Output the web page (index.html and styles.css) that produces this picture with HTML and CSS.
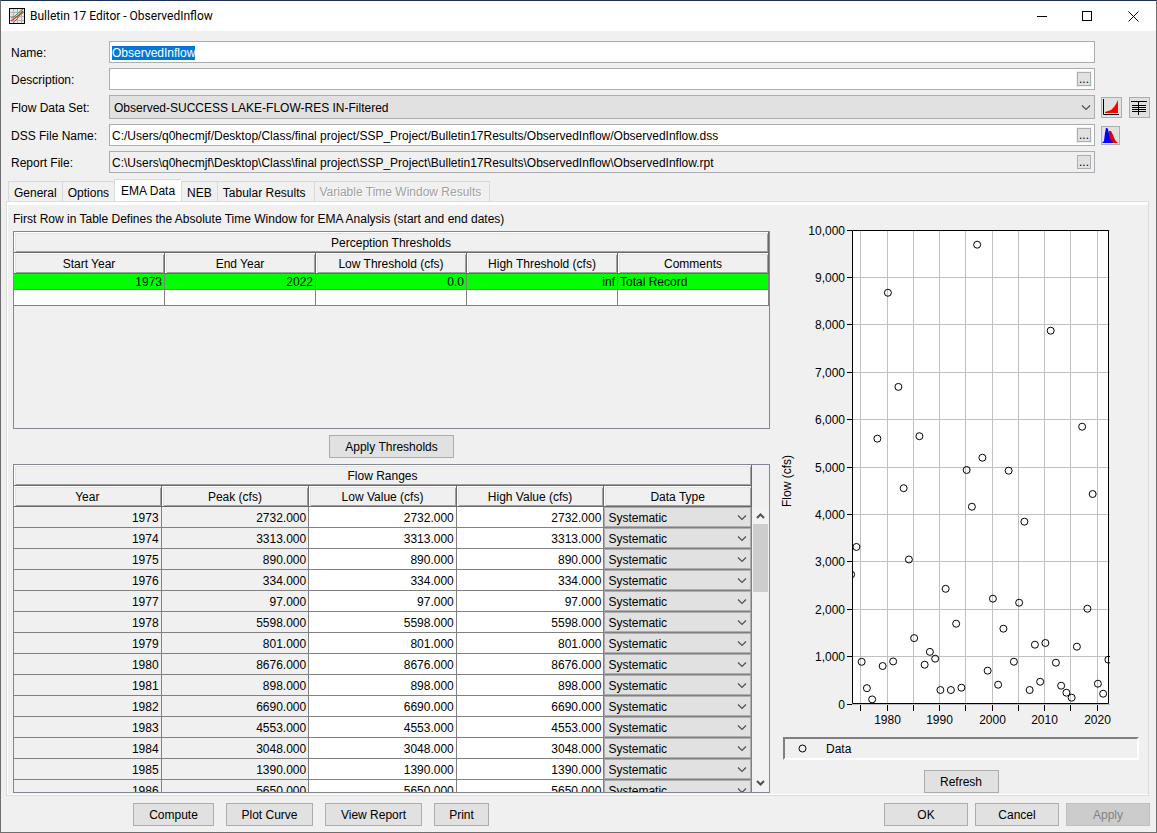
FILE: index.html
```html
<!DOCTYPE html>
<html lang="en">
<head>
  <meta charset="UTF-8" />
  <meta name="viewport" content="width=device-width, initial-scale=1.0"/>
  <title>Bulletin 17 Editor - ObservedInflow</title>
  <link rel="stylesheet" href="styles.css">
</head>
<body>
  <header class="titlebar">
    <svg class="app-icon" width="16" height="16" viewBox="0 0 16 16">
      <rect x="0.5" y="0.5" width="15" height="15" fill="#e4e4e4" stroke="#000"/>
      <path d="M4.5 1v14M8.5 1v14M12.5 1v14M1 4.5h14M1 8.5h14M1 12.5h14" stroke="#b4b4b4"/>
      <path d="M2 10l4-2 3-3 5-4M4 15l4-4 3-4 4-3" stroke="#3a9a4a" fill="none"/>
      <path d="M2 13l4-3 4-3 4-4" stroke="#e03030" stroke-width="1.3" fill="none"/>
    </svg>
    <h1>Bulletin 17 Editor - ObservedInflow</h1>
    <div class="window-buttons">
      <button type="button" aria-label="Minimize"><svg width="11" height="11"><path d="M1 5.5h10" stroke="#000"/></svg></button>
      <button type="button" aria-label="Maximize"><svg width="11" height="11"><rect x="0.5" y="0.5" width="9" height="9" fill="none" stroke="#000"/></svg></button>
      <button type="button" aria-label="Close"><svg width="11" height="11"><path d="M0.5 0.5l10 10M10.5 0.5l-10 10" stroke="#000"/></svg></button>
    </div>
  </header>

  <form class="fields">
    <label for="name">Name:</label>
    <div class="field"><input type="text" id="name" value="ObservedInflow"></div>
    <div class="tools"></div>

    <label for="description">Description:</label>
    <div class="field"><input type="text" id="description"><button type="button" class="browse">...</button></div>
    <div class="tools"></div>

    <label for="dataset">Flow Data Set:</label>
    <select id="dataset" class="dataset">
      <option>Observed-SUCCESS LAKE-FLOW-RES IN-Filtered</option>
    </select>
    <div class="tools">
      <button type="button" class="tool" aria-label="Plot">
        <svg width="19" height="19" viewBox="0 0 19 19">
          <path d="M3 15v-1l3-1 3-1 3-3 2-3 2-4v13z" fill="#f00"/>
          <path d="M1.5 1v15.5H17" stroke="#000" fill="none"/>
        </svg>
      </button>
      <button type="button" class="tool" aria-label="Tabulate">
        <svg width="19" height="19" viewBox="0 0 19 19">
          <path d="M1 3.500h16M2 7.500h14M2 9.500h14M2 11.500h14M2 13.500h14M8.500 3v14" stroke="#000" fill="none"/>
        </svg>
      </button>
    </div>

    <label for="dssfile">DSS File Name:</label>
    <div class="field"><input type="text" id="dssfile" value="C:/Users/q0hecmjf/Desktop/Class/final project/SSP_Project/Bulletin17Results/ObservedInflow/ObservedInflow.dss"><button type="button" class="browse">...</button></div>
    <div class="tools">
      <button type="button" class="tool small" aria-label="Open DSS file">
        <svg width="17" height="17" viewBox="0 0 17 17">
          <path d="M5 16l1-8 1-4h2l2 4 2 5 3 3z" fill="#e00000"/>
          <path d="M0 16l2-2 1-8 1-5h1l1 1 1 5 1 5 3 4z" fill="#0000ff"/>
        </svg>
      </button>
    </div>

    <label for="report">Report File:</label>
    <div class="field readonly"><input type="text" id="report" readonly value="C:\Users\q0hecmjf\Desktop\Class\final project\SSP_Project\Bulletin17Results\ObservedInflow\ObservedInflow.rpt"><button type="button" class="browse">...</button></div>
    <div class="tools"></div>
  </form>

  <nav class="tabs">
    <button type="button">General</button>
    <button type="button">Options</button>
    <button type="button" class="active">EMA Data</button>
    <button type="button">NEB</button>
    <button type="button" class="wide">Tabular Results</button>
    <button type="button" class="wide" disabled>Variable Time Window Results</button>
  </nav>

  <main class="panel">
    <section class="tables">
      <p>First Row in Table Defines the Absolute Time Window for EMA Analysis (start and end dates)</p>
      <div class="scrollpane thresholds">
        <table>
          <colgroup><col span="5"></colgroup>
          <thead>
            <tr><th colspan="5">Perception Thresholds</th></tr>
            <tr>
              <th>Start Year</th>
              <th>End Year</th>
              <th>Low Threshold (cfs)</th>
              <th>High Threshold (cfs)</th>
              <th>Comments</th>
            </tr>
          </thead>
          <tbody>
            <tr class="total"><td>1973</td><td>2022</td><td>0.0</td><td>inf</td><td class="text">Total Record</td></tr>
            <tr><td></td><td></td><td></td><td></td><td class="text"></td></tr>
          </tbody>
        </table>
      </div>
      <button type="button" class="btn apply-thresholds">Apply Thresholds</button>
      <div class="scrollpane ranges">
        <table>
          <colgroup><col span="5"></colgroup>
          <thead>
            <tr><th colspan="5">Flow Ranges</th></tr>
            <tr>
              <th>Year</th>
              <th>Peak (cfs)</th>
              <th>Low Value (cfs)</th>
              <th>High Value (cfs)</th>
              <th>Data Type</th>
            </tr>
          </thead>
          <tbody id="rangeRows"></tbody>
        </table>
        <div class="scrollbar">
          <svg width="9" height="6"><path d="M1 5l3.500-3.500L8 5" stroke="#505050" stroke-width="2" fill="none"/></svg>
          <div class="track"><div class="thumb"></div></div>
          <svg width="9" height="6"><path d="M1 1l3.500 3.500L8 1" stroke="#505050" stroke-width="2" fill="none"/></svg>
        </div>
      </div>
    </section>

    <section class="plot">
      <svg id="chart" class="chart" viewBox="0 0 356 505"></svg>
      <div class="legend">
        <svg width="9" height="9"><circle cx="4.500" cy="4.500" r="3.500" fill="none" stroke="#000"/></svg>
        <span>Data</span>
      </div>
      <button type="button" class="btn refresh">Refresh</button>
    </section>
  </main>

  <footer class="actions">
    <button type="button" class="btn compute">Compute</button>
    <button type="button" class="btn plot-curve">Plot Curve</button>
    <button type="button" class="btn view-report">View Report</button>
    <button type="button" class="btn print">Print</button>
    <div class="confirm">
      <button type="button" class="btn">OK</button>
      <button type="button" class="btn">Cancel</button>
      <button type="button" class="btn" disabled>Apply</button>
    </div>
  </footer>

  <script src="script.js"></script>
</body>
</html>
```
FILE: styles.css
```css
* {
  margin: 0;
  padding: 0;
  box-sizing: border-box;
}

body {
  display: flex;
  flex-direction: column;
  height: 100vh;
  min-height: 600px;
  background: #f0f0f0;
  border: 1px solid #6e6e6e;
  border-top-color: #1c2f57;
  color: #000;
  font-family: "Liberation Sans", Arial, sans-serif;
  font-size: 12px;
  line-height: 16px;
}

button, input, select {
  font: inherit;
  color: inherit;
}

::selection {
  background: #0078d7;
  color: #fff;
}

/* title bar */
.titlebar {
  display: flex;
  align-items: center;
  height: 30px;
  padding-left: 8px;
  background: #fff;
}

.titlebar h1 {
  flex: 1;
  margin-left: 5px;
  font-family: Roboto, "Segoe UI", sans-serif;
  font-size: 12px;
  font-weight: normal;
}

.window-buttons {
  display: flex;
}

.window-buttons button {
  display: flex;
  align-items: center;
  justify-content: center;
  width: 46px;
  height: 30px;
  border: none;
  background: none;
}

/* form */
.fields {
  display: grid;
  grid-template-columns: 98px 1fr 61px;
  row-gap: 5px;
  align-items: center;
  padding: 10px 0 6px 10px;
}

.fields label {
  padding-top: 2px;
}

.field {
  display: flex;
  align-items: center;
  height: 22px;
  padding: 0 3px 0 2px;
  background: #fff;
  border: 1px solid #abadb3;
}

.field.readonly {
  background: #f0f0f0;
}

.field input {
  flex: 1;
  min-width: 0;
  height: 18px;
  padding-top: 1px;
  border: none;
  outline: none;
  background: none;
}

.browse {
  width: 14px;
  height: 14px;
  line-height: 10px;
  background: #e1e1e1;
  border: 1px solid #adadad;
  outline: 1px solid #f0f0f0;
}

select {
  appearance: none;
  background: #e1e1e1 url("data:image/svg+xml,%3Csvg xmlns='http://www.w3.org/2000/svg' width='10' height='8'%3E%3Cpath d='M1 2.5l4 4 4-4' fill='none' stroke='%23505050' stroke-width='1.2'/%3E%3C/svg%3E") no-repeat right 3px center;
  border: 1px solid #adadad;
}

.dataset {
  height: 24px;
  padding: 1px 0 0 4px;
}

.tools {
  display: flex;
  gap: 7px;
  padding-left: 6px;
}

.tool {
  width: 21px;
  height: 21px;
  background: #e1e1e1;
  border: 1px solid #adadad;
}

.tool.small {
  width: 19px;
  height: 19px;
}

.tool svg {
  display: block;
}

/* tabs */
.tabs {
  display: flex;
  align-items: flex-end;
  height: 22px;
  padding-left: 7px;
}

.tabs button {
  height: 20px;
  padding: 2px 5px 0;
  background: #f0f0f0;
  border: 1px solid #d9d9d9;
  border-bottom: none;
  border-right: none;
}

.tabs button.active {
  height: 22px;
  padding: 1px 6px 0;
  background: #fff;
}

.tabs button.wide {
  padding-right: 8px;
}

.tabs button:last-child {
  border-right: 1px solid #d9d9d9;
}

.tabs button:disabled {
  padding-bottom: 2px;
  color: #a0a0a0;
  text-shadow: 1px 1px #fff;
}

.panel {
  flex: 1;
  display: grid;
  grid-template-columns: 757fr 356fr;
  column-gap: 13px;
  min-height: 0;
  margin: 0 7px 0 5px;
  padding: 9px 9px 2px 6px;
  border: 1px solid #dcdcdc;
  box-shadow: inset 1px 3px #fff, inset 0 -1px #fff;
}

.tables {
  display: flex;
  flex-direction: column;
  min-height: 0;
}

.tables p {
  margin-bottom: 4px;
}

.scrollpane {
  display: flex;
  align-items: flex-start;
  overflow: hidden;
  min-height: 0;
  border: 1px solid #828790;
}

.thresholds {
  flex: 3 1 0;
}

.ranges {
  flex: 5 1 0;
}

table {
  flex: 1;
  width: 100%;
  min-width: 0;
  table-layout: fixed;
  border-collapse: separate;
  border-spacing: 0;
}

col {
  width: 20%;
}

th {
  height: 21px;
  padding-top: 1px;
  font-weight: normal;
  border-right: 1px solid #696969;
  border-bottom: 1px solid #696969;
  box-shadow: inset 1px 1px #fff, inset 2px 2px #e3e3e3, inset -1px -1px #a0a0a0;
}

td {
  height: 16px;
  padding: 1px 2px 0;
  line-height: 14px;
  text-align: right;
  background: #fff;
  border-right: 1px solid #808080;
  border-bottom: 1px solid #808080;
}

td.text {
  text-align: left;
}

.total td {
  background: #0f0;
}

.ranges td {
  height: 21px;
  padding-top: 2px;
  line-height: 18px;
}

.ranges td.fixed {
  background: #f0f0f0;
}

.ranges td.type {
  padding: 0;
}

.type select {
  display: block;
  width: 100%;
  height: 20px;
  padding: 1px 0 0 3px;
}

.scrollbar {
  display: flex;
  flex-direction: column;
  align-items: center;
  align-self: stretch;
  flex: 0 0 17px;
  margin-top: 42px;
  padding: 6px 1px;
  background: #f2f2f2;
}

.track {
  flex: 1;
  width: 15px;
  margin: 5px 0;
}

.thumb {
  height: 27%;
  background: #cdcdcd;
}

.btn {
  height: 23px;
  background: #e1e1e1;
  border: 1px solid #adadad;
}

.btn:disabled {
  background: #ccc;
  border-color: #bfbfbf;
  color: #838383;
}

.apply-thresholds {
  align-self: center;
  width: 125px;
  margin: 6px 0;
}

/* plot */
.plot {
  display: flex;
  flex-direction: column;
  padding-top: 14px;
}

.chart {
  display: block;
  width: 100%;
  overflow: visible;
}

.chart text {
  font-size: 12px;
}

.grid {
  stroke: #c0c0c0;
}

.axis {
  fill: none;
  stroke: #000;
}

.point {
  fill: none;
  stroke: #000;
}

.legend {
  display: flex;
  align-items: center;
  gap: 19px;
  height: 23px;
  margin-top: 7px;
  padding-left: 13px;
  border: 2px solid #fff;
  border-top-color: #808080;
  border-left-color: #808080;
}

.refresh {
  align-self: center;
  width: 75px;
  margin-top: 10px;
}

/* bottom buttons */
.actions {
  display: flex;
  gap: 12px;
  padding: 7px 6px 6px 132px;
}

.compute {
  width: 81px;
}

.plot-curve {
  width: 87px;
}

.view-report {
  width: 97px;
}

.print {
  width: 55px;
}

.confirm {
  display: flex;
  gap: 7px;
  margin-left: auto;
}

.confirm .btn {
  width: 84px;
}
```
FILE: script.js
```js
const firstYear = 1973;
const flows = [
  2732, 3313, 890, 334, 97, 5598, 801, 8676, 898, 6690, 4553, 3048, 1390, 5650,
  829, 1100, 956, 295, 2430, 295, 1694, 344, 4937, 4162, 9690, 5196, 703, 2222,
  407, 1589, 4922, 892, 2137, 3846, 295, 1251, 470, 1287, 7876, 871, 386, 238,
  133, 1209, 5850, 2010, 4430, 428, 217, 935
];

// flow ranges table, enough rows to run under the bottom edge
const visibleRows = 14;
document.getElementById('rangeRows').innerHTML = flows.slice(0, visibleRows).map((flow, i) => {
  const value = flow.toFixed(3);
  const year = firstYear + i;
  return `
    <tr>
      <td class="fixed">${year}</td>
      <td class="fixed">${value}</td>
      <td>${value}</td>
      <td>${value}</td>
      <td class="type"><select aria-label="Data type ${year}"><option>Systematic</option></select></td>
    </tr>`;
}).join('');

// chart
const plot = { left: 69, right: 326, top: 5, bottom: 479 };
const xPos = year => 104 + (year - 1980) * 5.25;
const yPos = flow => plot.bottom - flow * (plot.bottom - plot.top) / 10000;
const snap = v => Math.floor(v) + 0.5;

let out = `<clipPath id="plotClip"><rect x="${plot.left}" y="${plot.top}" width="${plot.right - plot.left + 1}" height="${plot.bottom - plot.top}"/></clipPath>`;
out += `<rect x="${plot.left}" y="${plot.top}" width="${plot.right - plot.left}" height="${plot.bottom - plot.top}" fill="#fff"/>`;

for (let year = 1975; year <= 2020; year += 5) {
  const x = snap(xPos(year));
  out += `<path class="grid" d="M${x} ${plot.top}V${plot.bottom}"/>`;
  out += `<path class="axis" d="M${x} ${plot.bottom + 1}v6"/>`;
  if (year % 10 === 0) {
    out += `<text x="${x}" y="499" text-anchor="middle">${year}</text>`;
  }
}

for (let flow = 0; flow <= 10000; flow += 1000) {
  const y = snap(yPos(flow));
  out += `<path class="grid" d="M${plot.left} ${y}H${plot.right + 1}"/>`;
  out += `<path class="axis" d="M${plot.left - 5} ${y}H${plot.left}"/>`;
  out += `<text x="62" y="${y + 4}" text-anchor="end">${flow.toLocaleString('en-US')}</text>`;
}

out += `<path class="axis" d="M69.5 478.5V5.5H325.5V478.5Z"/>`;
out += '<g clip-path="url(#plotClip)">';
flows.forEach((flow, i) => {
  out += `<circle class="point" cx="${xPos(firstYear + i) + 0.9}" cy="${yPos(flow)}" r="3.5"/>`;
});
out += '</g>';
out += '<text transform="translate(8 256) rotate(-90)" text-anchor="middle">Flow (cfs)</text>';
document.getElementById('chart').innerHTML = out;

document.getElementById('name').focus();
document.getElementById('name').select();
```
